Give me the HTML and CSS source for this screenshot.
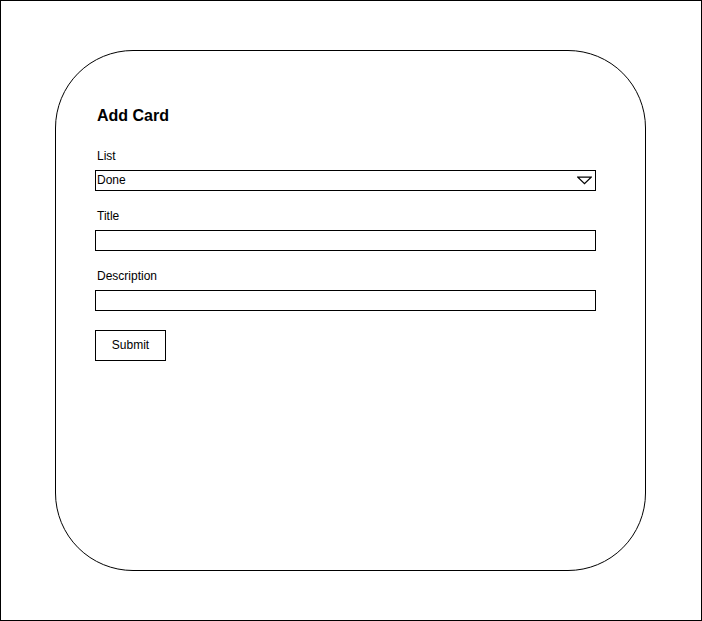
FILE: index.html
```html
<!DOCTYPE html>
<html lang="en">
<head>
<meta charset="utf-8">
<title>Add Card</title>
<link rel="stylesheet" href="styles.css">
</head>
<body>
<div class="frame">
  <div class="card">
    <h1 class="title">Add Card</h1>
    <div class="field">
      <label class="label">List</label>
      <div class="select">
        <span class="select-value">Done</span>
        <svg class="caret" width="15" height="9" viewBox="0 0 15 9"><path d="M0.8 1.2 H14.2 L7.5 7.6 Z" fill="#fff" stroke="#000" stroke-width="1.3" stroke-linejoin="miter"/></svg>
      </div>
    </div>
    <div class="field">
      <label class="label">Title</label>
      <input class="input" type="text">
    </div>
    <div class="field">
      <label class="label">Description</label>
      <input class="input" type="text">
    </div>
    <button class="submit" type="button">Submit</button>
  </div>
</div>
</body>
</html>
```
FILE: styles.css
```css
* { box-sizing: border-box; }
html, body { margin: 0; padding: 0; background: #fff; }
body { font-family: "Liberation Sans", Arial, sans-serif; font-size: 12px; color: #000; }

.frame {
  width: 702px;
  height: 621px;
  border: 1px solid #000;
  padding: 49px 0 0 54px;
}

.card {
  width: 591px;
  height: 521px;
  border: 1px solid #000;
  border-radius: 78px;
  padding: 55px 0 0 39px;
  display: flex;
  flex-direction: column;
  align-items: flex-start;
}

.title {
  margin: 0 0 22px 2px;
  font-size: 16px;
  font-weight: bold;
  line-height: 20px;
}

.field {
  display: flex;
  flex-direction: column;
  gap: 7px;
  margin-bottom: 17px;
}

.label {
  line-height: 14px;
  padding: 1px 0 0 2px;
}

.select, .input {
  width: 501px;
  height: 21px;
  border: 1px solid #000;
  background: #fff;
  margin: 0;
  font: inherit;
}

.select {
  display: flex;
  align-items: center;
  justify-content: space-between;
  padding: 0 3px 0 1px;
}

.select-value { line-height: 19px; }

.caret { display: block; }

.input { padding: 0 1px; outline: none; }

.submit {
  margin-top: 2px;
  width: 71px;
  height: 31px;
  border: 1px solid #000;
  background: #fff;
  font: inherit;
  padding: 0 0 1px;
  color: #000;
}
```
